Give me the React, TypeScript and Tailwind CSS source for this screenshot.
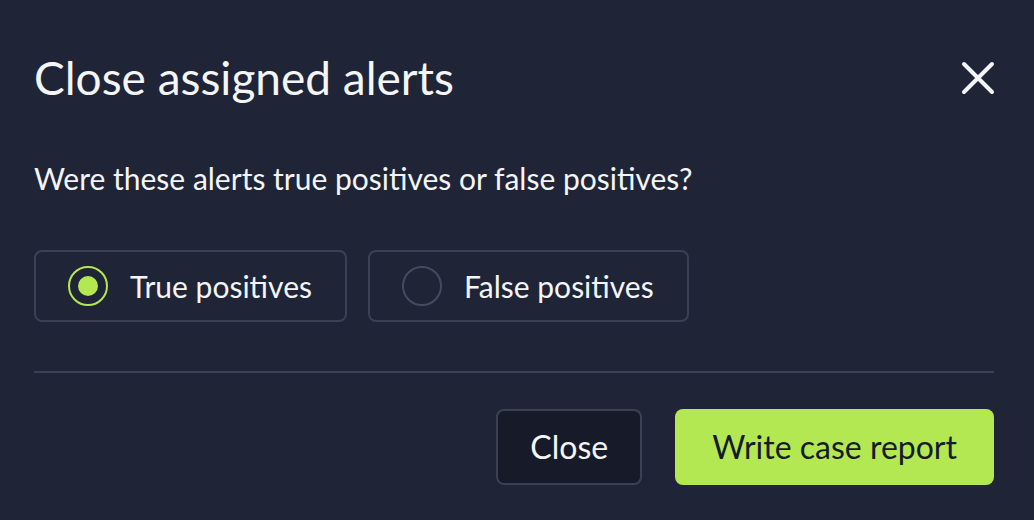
import { useState } from "react";

const options = ["True positives", "False positives"];

const Radio = ({ checked }: { checked: boolean }) => (
  <span
    className={
      checked
        ? "flex h-[40px] w-[40px] items-center justify-center rounded-full border-2 border-[#b3e853]"
        : "flex h-[40px] w-[40px] items-center justify-center rounded-full border-2 border-[#454b5e]"
    }
  >
    {checked && <span className="h-[20px] w-[20px] rounded-full bg-[#b3e853]" />}
  </span>
);

const App = () => {
  const [choice, setChoice] = useState(0);

  return (
    <div className="h-[520px] w-[1034px] overflow-hidden bg-[#1f2437] pl-[34px] pr-[40px] pt-[50px] font-['Lato',sans-serif] text-[#f4f5f7]">
      <div className="flex items-center justify-between">
        <h1 className="text-[46px] leading-[56px]">Close assigned alerts</h1>
        <button className="mr-[-2px] text-[#f4f5f7]">
          <svg width="36" height="36" viewBox="0 0 36 36" fill="none">
            <path d="M4 4L32 32M32 4L4 32" stroke="currentColor" strokeWidth="4" strokeLinecap="round" />
          </svg>
        </button>
      </div>

      <p className="mt-[52px] text-[30px] leading-[40px]">Were these alerts true positives or false positives?</p>

      <div className="mt-[52px] flex gap-[21px]">
        {options.map((label, i) => (
          <button
            key={label}
            onClick={() => setChoice(i)}
            className="flex h-[72px] items-center gap-[22px] rounded-[8px] border-2 border-[#3b4154] pl-[32px] pr-[33px]"
          >
            <Radio checked={choice === i} />
            <span className="text-[30px]">{label}</span>
          </button>
        ))}
      </div>

      <div className="mt-[49px] h-[2px] w-full bg-[#3b4154]" />

      <div className="mt-[36px] flex justify-end gap-[33px]">
        <button className="h-[76px] rounded-[8px] border-2 border-[#3b4154] bg-[#171b29] px-[32px] text-[32px]">
          Close
        </button>
        <button className="h-[76px] rounded-[8px] bg-[#b3e853] px-[37px] text-[32px] text-[#171b29]">
          Write case report
        </button>
      </div>
    </div>
  );
};

export default App;
